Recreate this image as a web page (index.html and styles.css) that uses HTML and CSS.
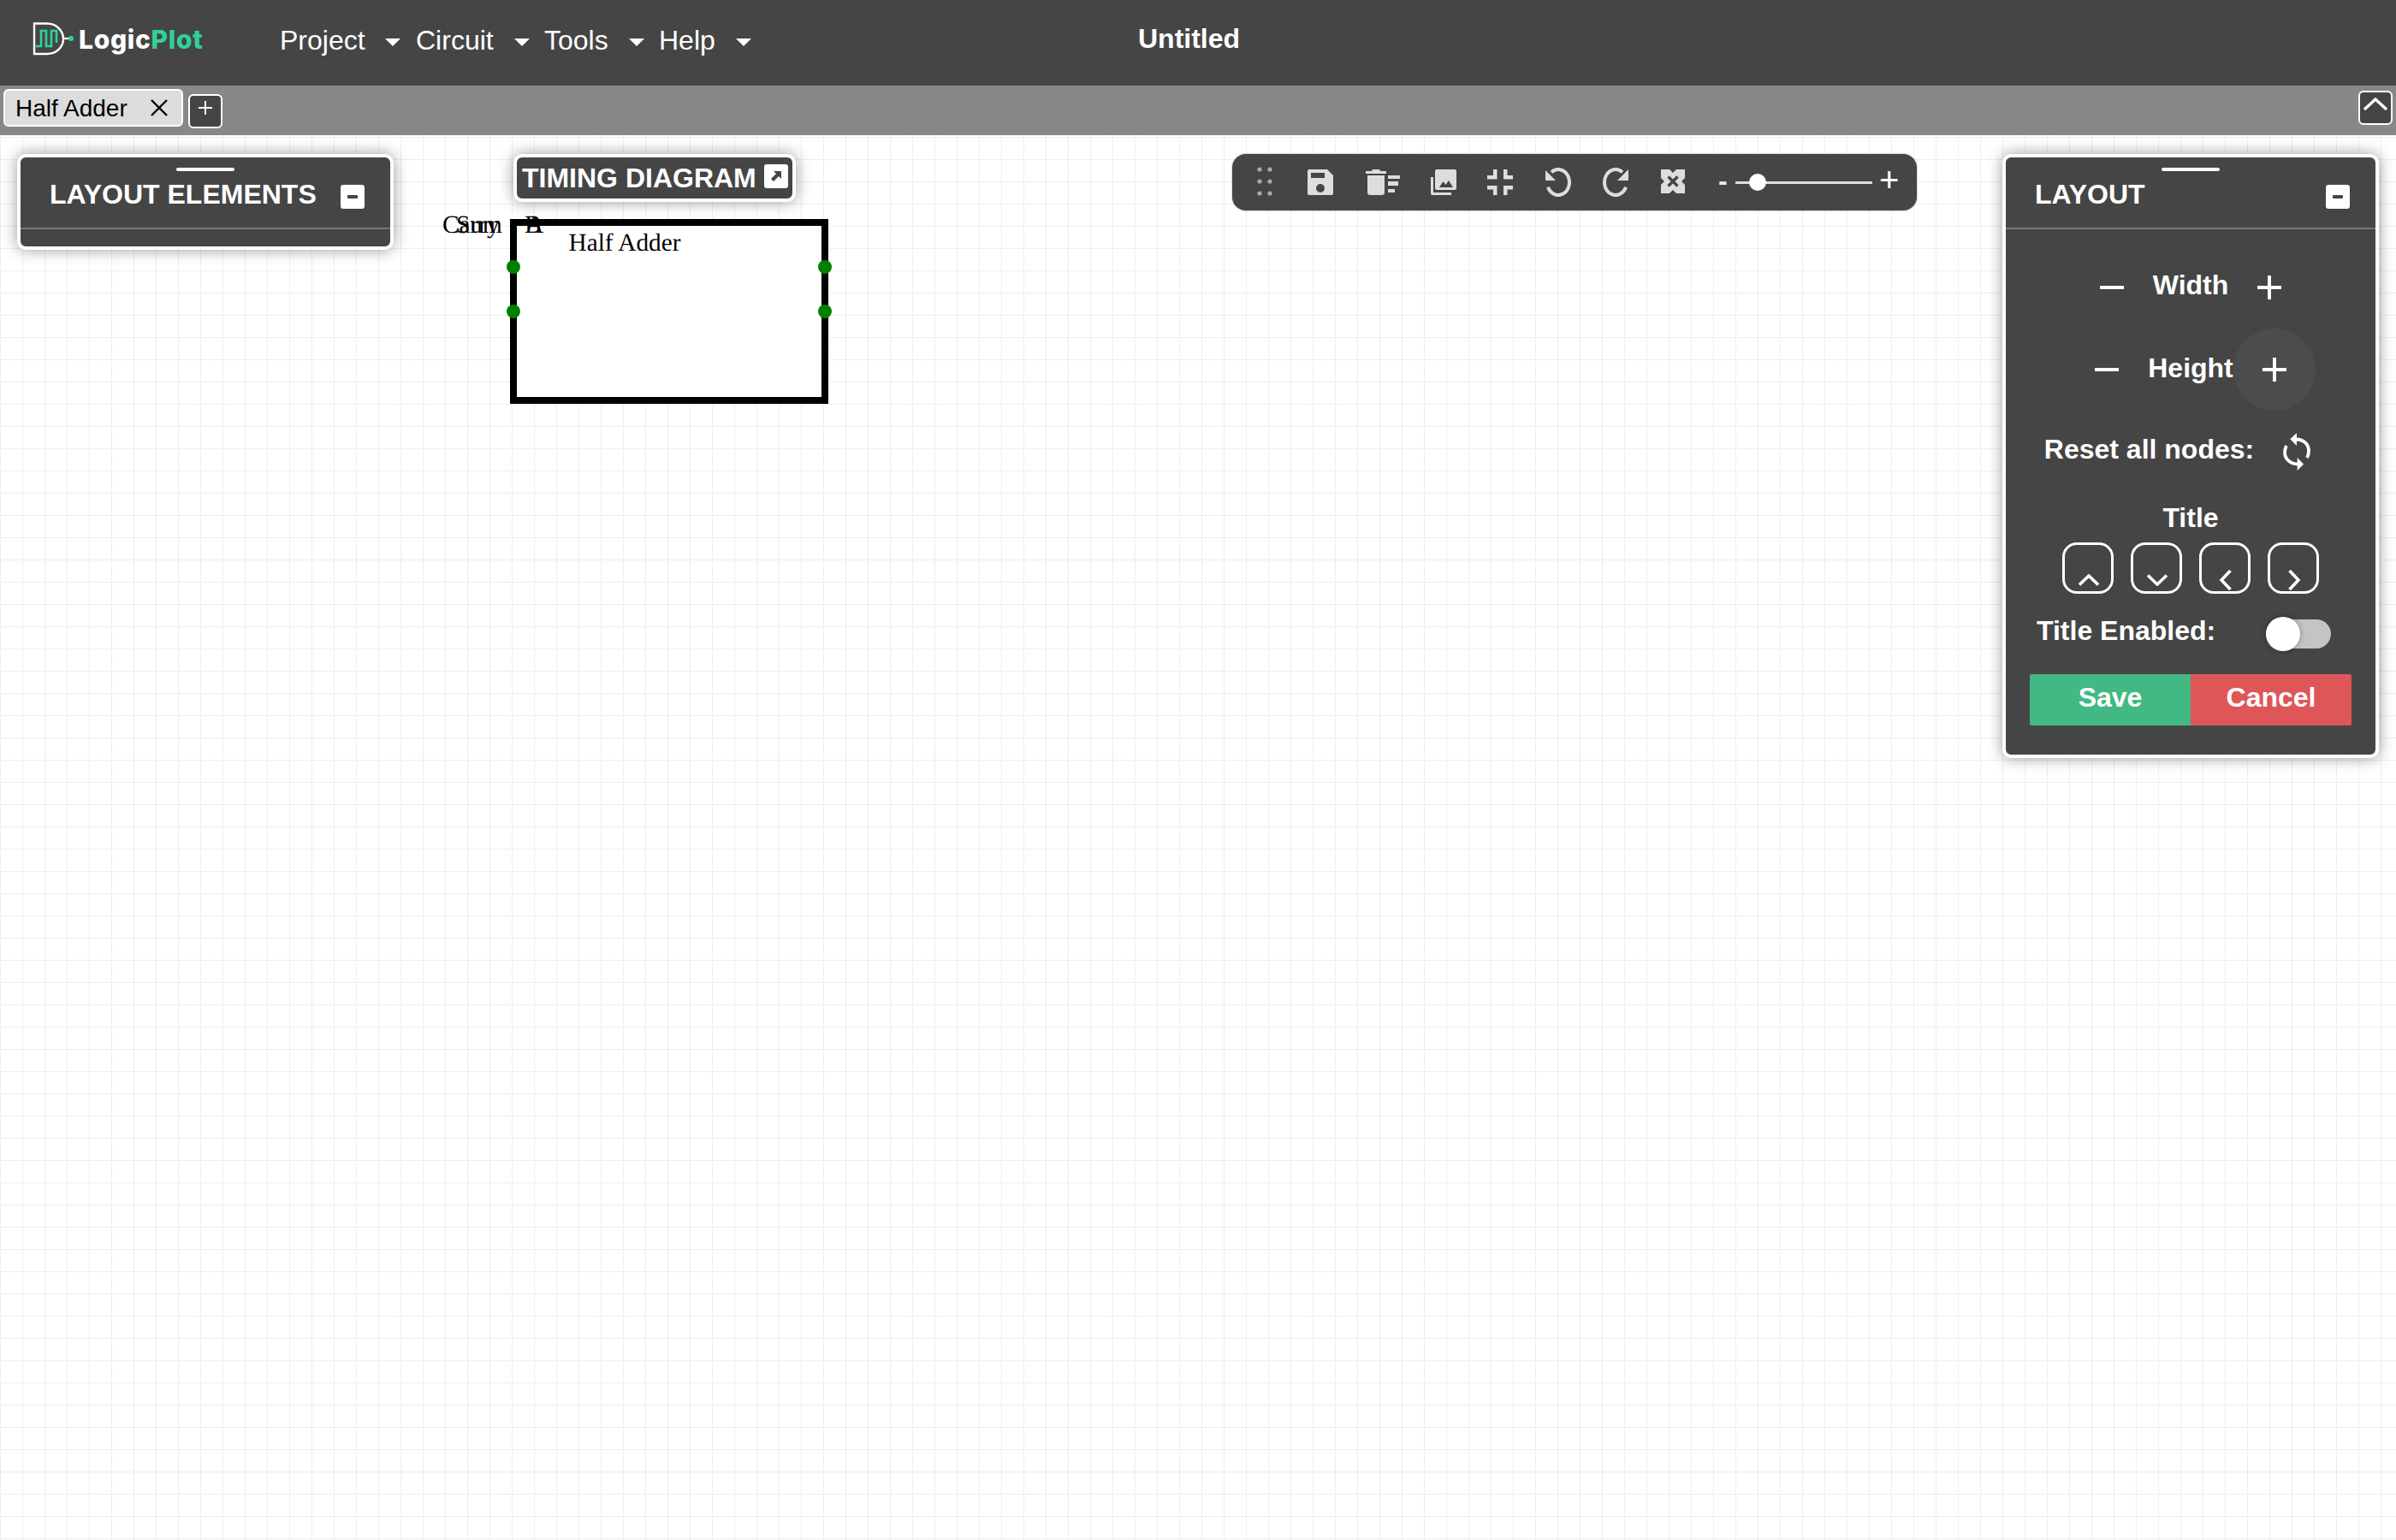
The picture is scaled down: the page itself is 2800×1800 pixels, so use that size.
FILE: index.html
```html
<!DOCTYPE html>
<html lang="en">
<head>
<meta charset="utf-8">
<title>LogicPlot</title>
<link rel="stylesheet" href="styles.css">
</head>
<body>
<div class="app">
  <header class="navbar">
    <div class="brand">
      <svg class="brand-mark" viewBox="0 0 50 40" aria-hidden="true">
        <path d="M2 1.5H17C29 1.5 36 11 36 19.5C36 28 29 37 17 37H2Z" fill="none" stroke="#fff" stroke-width="2.4"/>
        <path d="M4 28H10V10H16V28H22V10H28V24" fill="none" stroke="#2fd197" stroke-width="2.6"/>
        <path d="M36 19H44" stroke="#fff" stroke-width="2.2"/>
        <circle cx="45" cy="19" r="3" fill="#2fd197"/>
      </svg>
      <span class="brand-text">Logic<span class="brand-accent">Plot</span></span>
    </div>
    <nav class="menu">
      <div class="menu-item"><span>Project</span><i class="caret"></i></div>
      <div class="menu-item"><span>Circuit</span><i class="caret"></i></div>
      <div class="menu-item"><span>Tools</span><i class="caret"></i></div>
      <div class="menu-item"><span>Help</span><i class="caret"></i></div>
    </nav>
    <div class="doc-title">Untitled</div>
  </header>
  <div class="tabbar">
    <div class="tab"><span>Half Adder</span>
      <svg class="tab-close" viewBox="0 0 20 20"><path d="M1 1L19 19M19 1L1 19" stroke="#000" stroke-width="2.4"/></svg>
    </div>
    <button class="tab-add"><svg viewBox="0 0 16 16"><path d="M8 0V16M0 8H16" stroke="#fff" stroke-width="2"/></svg></button>
    <button class="tab-collapse"><svg viewBox="0 0 30 16"><path d="M2 14L15 2L28 14" fill="none" stroke="#fff" stroke-width="3.4"/></svg></button>
  </div>
  <main class="canvas">
    <section class="panel panel-elements">
      <div class="handle"></div>
      <div class="panel-head"><span class="panel-title">LAYOUT ELEMENTS</span><span class="panel-btn"><i></i></span></div>
    </section>

    <section class="timing">
      <span>TIMING DIAGRAM</span>
      <span class="timing-btn"><svg viewBox="0 0 16 16"><path d="M5 2H14V11L11 8L5 14L2 11L8 5Z" fill="#454545"/></svg></span>
    </section>

    <div class="circuit">
      <span class="lbl lbl-carry">Carry</span>
      <span class="lbl lbl-sum">Sum</span>
      <span class="lbl lbl-a">A</span>
      <span class="lbl lbl-b">B</span>
      <span class="lbl lbl-name">Half Adder</span>
      <i class="node n1"></i><i class="node n2"></i><i class="node n3"></i><i class="node n4"></i>
    </div>

    <div class="toolbar">
      <svg class="tb-ic tb-drag" viewBox="0 0 18 34"><g fill="#aaa"><circle cx="3" cy="3" r="2.6"/><circle cx="15" cy="3" r="2.6"/><circle cx="3" cy="17" r="2.6"/><circle cx="15" cy="17" r="2.6"/><circle cx="3" cy="31" r="2.6"/><circle cx="15" cy="31" r="2.6"/></g></svg>
      <svg class="tb-ic tb-save" viewBox="0 0 30 30"><path fill-rule="evenodd" fill="#ddd" d="M2 0H23L30 7V28Q30 30 28 30H2Q0 30 0 28V2Q0 0 2 0ZM4 4V10H20V4ZM15 17A5 5 0 1 0 15 27A5 5 0 1 0 15 17Z"/></svg>
      <svg class="tb-ic tb-trash" viewBox="0 0 40 30"><path fill="#ddd" d="M0 2H7L8 0H16L17 2H24V5H0ZM2 7H22V27Q22 30 19 30H5Q2 30 2 27ZM26 7H40V11H26ZM26 14H38V19H26ZM26 23H34V27H26Z"/></svg>
      <svg class="tb-ic tb-photo" viewBox="0 0 30 30"><path fill-rule="evenodd" fill="#ddd" d="M7 0H28Q30 0 30 2V22Q30 24 28 24H7Q5 24 5 22V2Q5 0 7 0ZM10 21L14.5 14L17.5 18L21 13L26 21Z"/><path fill="#ddd" d="M0 9H3V27H24V30H2Q0 30 0 28Z"/></svg>
      <svg class="tb-ic tb-shrink" viewBox="0 0 30 30"><path fill="#ddd" d="M7 0H11.5V11.5H0V7H7ZM19 0H23.5V7H30V11.5H19ZM0 19H11.5V30H7V23.5H0ZM19 19H30V23.5H23.5V30H19Z"/></svg>
      <svg class="tb-ic tb-undo" viewBox="0 0 30 34"><path fill="none" stroke="#ddd" stroke-width="4" d="M7 5.2A13 15 0 1 1 3 22.8"/><path fill="#ddd" d="M0 3V15H12Z"/></svg>
      <svg class="tb-ic tb-redo" viewBox="0 0 31 34"><path fill="none" stroke="#ddd" stroke-width="4" d="M24 5.2A13 15 0 1 0 28 22.8"/><path fill="#ddd" d="M31 2V15H18Z"/></svg>
      <svg class="tb-ic tb-expand" viewBox="0 0 28 28"><rect width="28" height="28" fill="#ddd"/><path fill="none" stroke="#454545" stroke-width="3.4" d="M8.500 8.500L19.500 19.500M19.500 8.500L8.500 19.500"/><path fill="#454545" d="M10 0H18L14 4ZM10 28H18L14 24ZM0 10V18L4 14ZM28 10V18L24 14Z"/></svg>
      <div class="zoom">
        <span class="zoom-minus">-</span>
        <div class="zoom-track"><i class="zoom-thumb"></i></div>
        <span class="zoom-plus">+</span>
      </div>
    </div>

    <section class="panel panel-layout">
      <div class="handle"></div>
      <div class="panel-head"><span class="panel-title">LAYOUT</span><span class="panel-btn"><i></i></span></div>
      <div class="panel-body">
        <div class="stepper stepper-w"><i class="sym minus"></i><span>Width</span><i class="sym plus"></i></div>
        <div class="stepper stepper-h"><i class="sym minus"></i><span>Height</span><span class="hover-circle"><i class="sym plus"></i></span></div>
        <div class="reset"><span>Reset all nodes:</span>
          <svg viewBox="0 0 32 44"><g fill="none" stroke="#fff" stroke-width="3.8"><path d="M15 7.5C25 7.5 30 14 30 21C30 24 29.5 26.5 28 29"/><path d="M18 36.5C8 36.5 2 30 2 23C2 20 2.5 17.5 4 15"/></g><path fill="#fff" d="M16 0V15L8.300 7.300ZM16.700 29V44L24 36.500Z"/></svg>
        </div>
        <div class="title-label">Title</div>
        <div class="title-dirs">
          <span class="dir"><svg viewBox="0 0 24 14"><path d="M1 12.500L12 2L23 12.500" fill="none" stroke="#fff" stroke-width="3.600"/></svg></span>
          <span class="dir"><svg viewBox="0 0 24 14"><path d="M1 1.500L12 12L23 1.500" fill="none" stroke="#fff" stroke-width="3.600"/></svg></span>
          <span class="dir dir-h"><svg viewBox="0 0 14 24"><path d="M12.500 1L2 12L12.500 23" fill="none" stroke="#fff" stroke-width="3.600"/></svg></span>
          <span class="dir dir-h"><svg viewBox="0 0 14 24"><path d="M1.500 1L12 12L1.500 23" fill="none" stroke="#fff" stroke-width="3.600"/></svg></span>
        </div>
        <div class="title-toggle"><span>Title Enabled:</span><span class="switch"><i class="switch-thumb"></i></span></div>
        <div class="actions"><button class="btn btn-save">Save</button><button class="btn btn-cancel">Cancel</button></div>
      </div>
    </section>
  </main>
</div>
</body>
</html>
```
FILE: styles.css
```css
* { box-sizing: border-box; }
html, body { margin: 0; height: 100%; }
body { font-family: "Liberation Sans", Arial, sans-serif; overflow: hidden; background: #fff; }
.app { display: flex; flex-direction: column; height: 1800px; }

.navbar { height: 100px; flex: none; background: #454545; color: #fff; display: flex; align-items: flex-start; position: relative; }
.brand { display: flex; align-items: center; margin: 26px 0 0 38px; width: 289px; }
.brand-mark { width: 50px; height: 40px; flex: none; }
.brand-text { font-family: Inter, "Liberation Sans", sans-serif; font-weight: 800; font-size: 30px; line-height: 40px; margin-left: 4px; letter-spacing: .7px; }
.brand-accent { color: #2fd197; }
.menu { display: flex; margin-top: 29px; }
.menu-item { display: flex; align-items: center; height: 36px; font-size: 32px; }
.menu-item:nth-child(1) { width: 159px; }
.menu-item:nth-child(2) { width: 150px; }
.menu-item:nth-child(3) { width: 134px; }
.caret { width: 0; height: 0; border-left: 9px solid transparent; border-right: 9px solid transparent; border-top: 9px solid #fff; margin: 4px 0 0 24px; }
.menu-item:nth-child(1) .caret { margin-left: 23px; }
.doc-title { position: absolute; left: 1330px; top: 26px; font-size: 32px; font-weight: 700; line-height: 38px; }

.tabbar { height: 58px; flex: none; background: #888; display: flex; align-items: flex-start; position: relative; padding: 4px 0 0 4px; }
.tab { width: 210px; height: 44px; border: 2px solid #fff; border-radius: 6px; background: #dcdcdc; display: flex; align-items: center; justify-content: space-between; padding: 1px 16px 0 12px; font-size: 28px; color: #000; }
.tab-close { width: 20px; height: 20px; margin-top: -1px; }
.tab-add { width: 40px; height: 40px; margin: 6px 0 0 6px; padding: 0; border: 2px solid #fff; border-radius: 6px; background: #454545; display: flex; align-items: flex-start; justify-content: center; }
.tab-add svg { width: 16px; height: 16px; margin-top: 6px; }
.tab-collapse { position: absolute; right: 4px; top: 6px; width: 40px; height: 40px; padding: 0; border: 2px solid #fff; border-radius: 6px; background: #454545; display: flex; align-items: flex-start; justify-content: center; }
.tab-collapse svg { width: 30px; height: 16px; margin-top: 6px; flex: none; }

.canvas { flex: 1; position: relative; background-color: #fff; background-image: linear-gradient(#eee 1px, transparent 1px), linear-gradient(90deg, #eee 1px, transparent 1px); background-size: 26px 26px; background-position: 0 2px; }

.panel { position: absolute; width: 440px; background: #454545; border: 4px solid #fff; border-radius: 10px; box-shadow: 0 0 18px rgba(0,0,0,.4); color: #fff; }
.panel-elements { left: 20px; top: 22px; height: 112px; }
.panel-layout { left: 2340px; top: 22px; height: 706px; }
.handle { position: absolute; left: 182px; top: 12px; width: 68px; height: 4px; border-radius: 2px; background: #fff; }
.panel-head { height: 84px; border-bottom: 2px solid #777; padding: 24px 30px 0 34px; display: flex; justify-content: space-between; align-items: flex-start; }
.panel-title { font-size: 32px; font-weight: 700; line-height: 38px; }
.panel-btn { width: 28px; height: 28px; margin-top: 8px; background: #fff; border-radius: 3px; display: flex; align-items: center; justify-content: center; }
.panel-btn i { width: 12px; height: 4px; background: #454545; border-radius: 1px; }
.panel-body { display: flex; flex-direction: column; align-items: center; font-size: 32px; font-weight: 700; }

.stepper { display: flex; align-items: center; justify-content: center; height: 36px; gap: 34px; }
.stepper-w { margin-top: 47px; }
.stepper-h { margin-top: 61px; }
.sym { display: block; width: 28px; height: 28px; position: relative; }
.sym::before { content: ""; position: absolute; left: 0; right: 0; top: 12px; height: 4px; background: #fff; }
.plus::after { content: ""; position: absolute; top: 0; bottom: 0; left: 12px; width: 4px; background: #fff; }
.stepper-w .sym { margin-top: 6px; }
.stepper-h .sym { margin-top: 4px; }
.hover-circle { display: block; width: 28px; height: 28px; position: relative; }
.hover-circle::before { content: ""; position: absolute; left: -34px; top: -32px; width: 96px; height: 96px; border-radius: 50%; background: #4c4c4c; }
.stepper-h .hover-circle .sym { margin-top: 2px; }
.reset { display: flex; align-items: center; gap: 34px; margin: 55px 0 0 -31px; height: 44px; }
.reset svg { width: 32px; height: 44px; margin-top: 6px; }
.title-label { margin-top: 40px; line-height: 36px; }
.title-dirs { display: flex; gap: 20px; margin-top: 11px; }
.dir { width: 60px; height: 60px; border: 3px solid #fff; border-radius: 17px; display: flex; justify-content: center; align-items: flex-end; padding: 0 0 6px 1px; }
.dir svg { width: 24px; height: 14px; }
.dir-h { padding-bottom: 1px; }
.dir-h svg { width: 14px; height: 24px; }
.title-toggle { display: flex; align-items: center; justify-content: space-between; width: 344px; margin: 21px 0 0 -16px; height: 44px; }
.switch { width: 76px; height: 34px; border-radius: 17px; background: #c4c4c4; position: relative; margin-top: 8px; }
.switch-thumb { position: absolute; left: 0; top: -3px; width: 40px; height: 40px; border-radius: 50%; background: #fff; box-shadow: 0 0 6px rgba(0,0,0,.35); }
.actions { display: flex; margin-top: 29px; width: 376px; }
.btn { flex: 1; height: 60px; border: 0; font: 700 32px "Liberation Sans", Arial, sans-serif; color: #fff; padding: 0 0 6px; }
.btn-save { background: #42b883; border-radius: 2px 0 0 2px; }
.btn-cancel { background: #de5658; border-radius: 0 2px 2px 0; }

.timing { position: absolute; left: 600px; top: 22px; width: 330px; height: 56px; background: #454545; border: 4px solid #fff; border-radius: 10px; box-shadow: 0 0 18px rgba(0,0,0,.4); color: #fff; font-size: 32px; font-weight: 700; display: flex; align-items: center; justify-content: space-between; padding: 0 5px 0 6px; }
.timing-btn { width: 28px; height: 28px; background: #fff; border-radius: 3px; display: flex; align-items: center; justify-content: center; margin-top: -4px; }
.timing-btn svg { width: 16px; height: 16px; }

.circuit { position: absolute; left: 596px; top: 98px; width: 372px; height: 216px; background: #fff; border: 8px solid #000; font-family: "Liberation Serif", "Times New Roman", serif; font-size: 29.3px; text-rendering: geometricPrecision; color: #000; }
.lbl { position: absolute; line-height: 32px; white-space: nowrap; }
.lbl-carry { left: -87px; top: -17px; }
.lbl-sum { left: -71px; top: -17px; }
.lbl-a { left: 10px; top: -17px; }
.lbl-b { left: 9px; top: -17px; }
.lbl-name { left: 60.5px; top: 4px; }
.node { position: absolute; width: 16px; height: 16px; border-radius: 50%; background: #008000; }
.n1 { left: -12px; top: 40px; }
.n2 { left: -12px; top: 92px; }
.n3 { right: -12px; top: 40px; }
.n4 { right: -12px; top: 92px; }

.toolbar { position: absolute; left: 1440px; top: 22px; width: 800px; height: 66px; background: #454545; border-radius: 16px; box-shadow: 0 0 2px rgba(0,0,0,.5); display: flex; align-items: center; }
.tb-ic { flex: none; width: 30px; height: 30px; }
.tb-drag { width: 18px; height: 34px; margin: -2px 0 0 29px; }
.tb-save { margin-left: 41px; }
.tb-trash { width: 40px; margin-left: 38px; }
.tb-photo { margin-left: 36px; }
.tb-shrink { margin-left: 36px; }
.tb-undo { height: 34px; margin-left: 38px; }
.tb-redo { width: 31px; height: 34px; margin-left: 36px; }
.tb-expand { width: 28px; height: 28px; margin: -2px 0 0 38px; }
.zoom { display: flex; align-items: center; margin-left: 39px; color: #eee; }
.zoom-minus { font-size: 32px; font-weight: 700; width: 11px; margin-top: -4px; }
.zoom-track { width: 160px; height: 3px; background: #ddd; position: relative; margin-left: 9px; }
.zoom-thumb { position: absolute; left: 16px; top: -9px; width: 20px; height: 20px; border-radius: 50%; background: #fff; }
.zoom-plus { font-size: 40px; margin-left: 8px; color: #fff; margin-top: -6px; }
```
